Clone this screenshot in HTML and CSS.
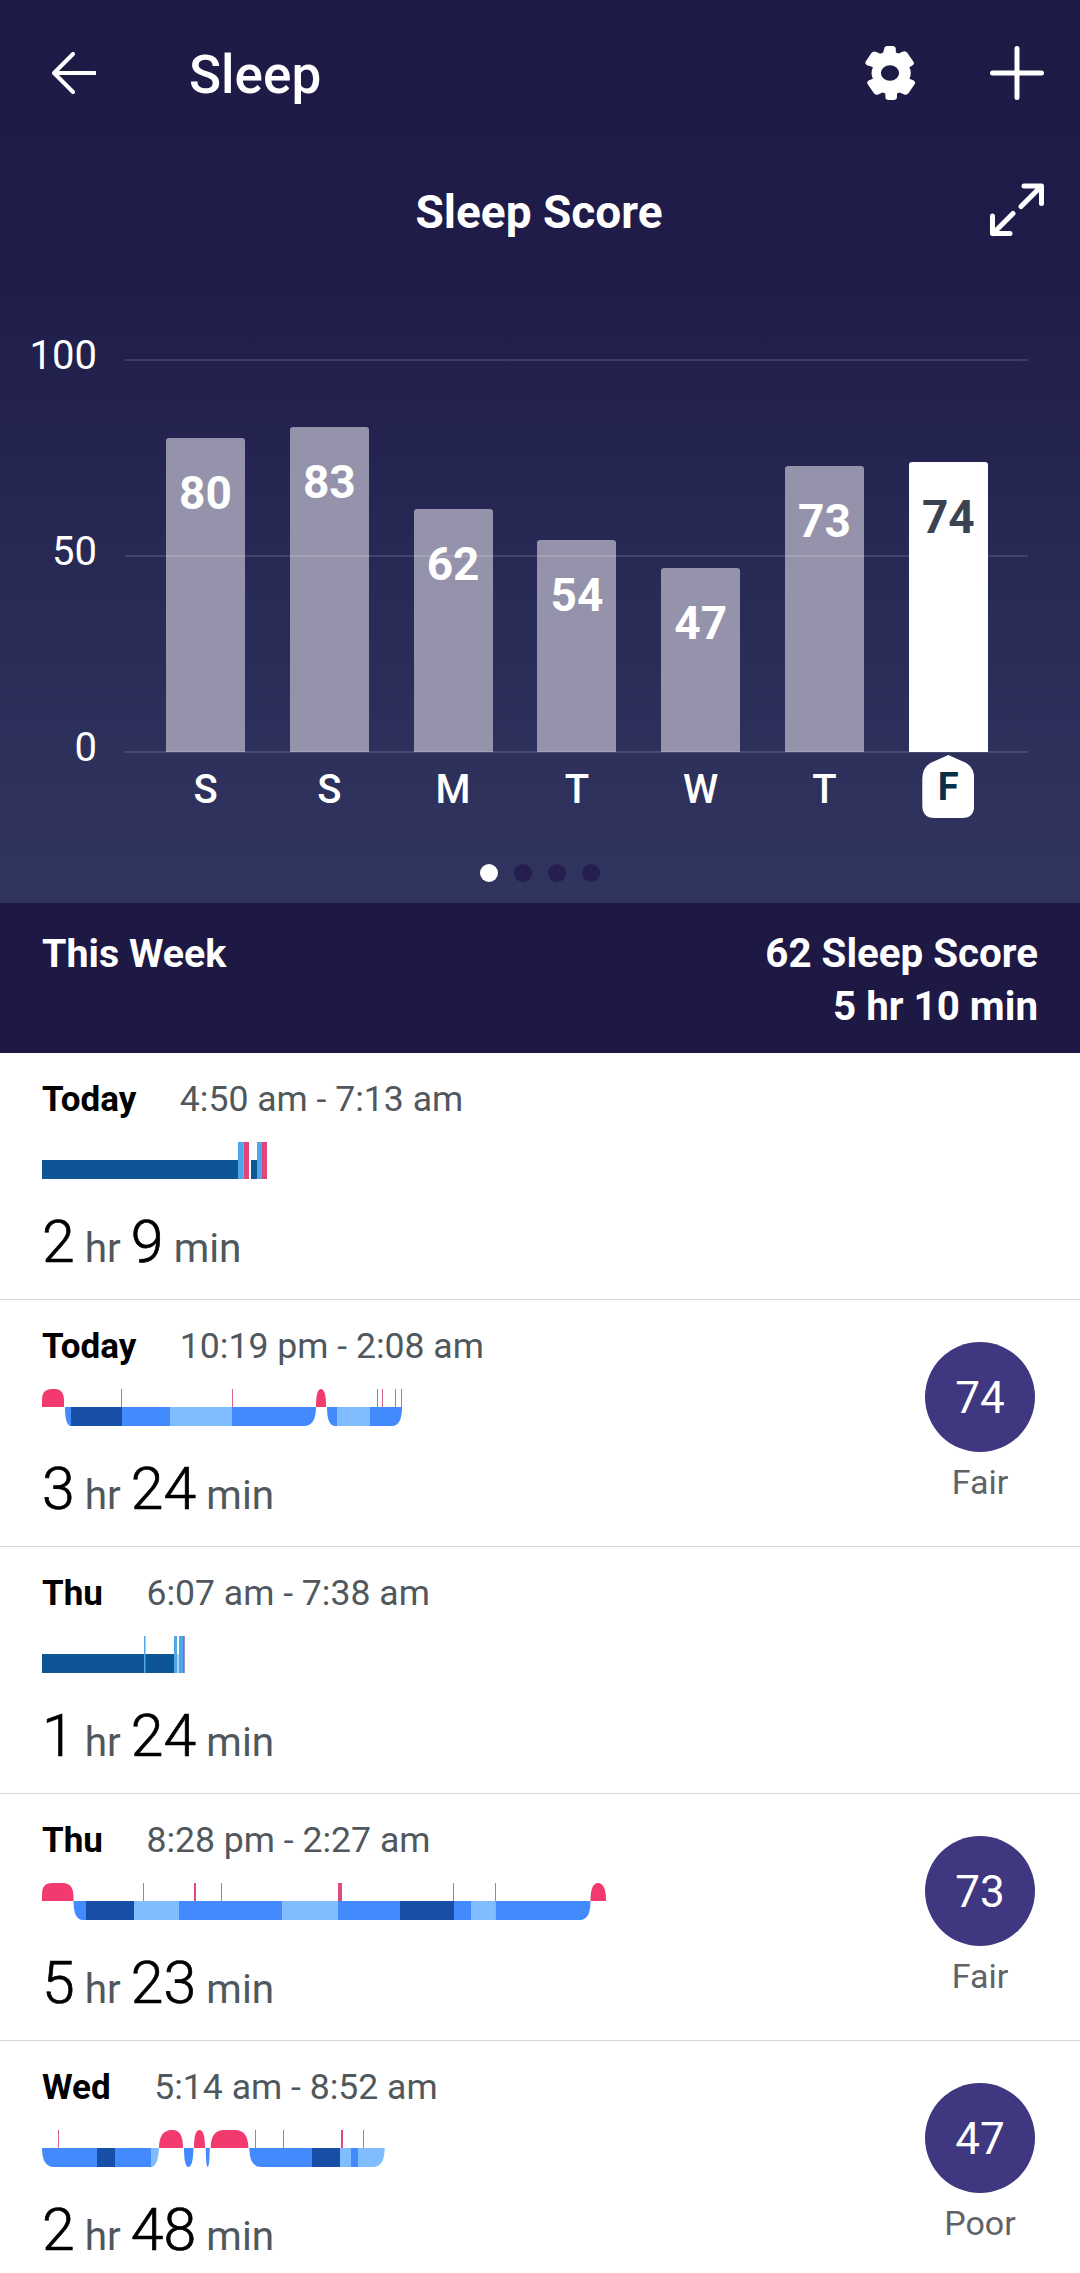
FILE: index.html
```html
<!DOCTYPE html>
<html lang="en">
<head>
<meta charset="UTF-8">
<meta name="viewport" content="width=device-width, initial-scale=1.0">
<title>Sleep</title>
<link rel="stylesheet" href="styles.css">
</head>
<body>
    <section class="hero">
        <header class="topbar">
            <svg class="icon-back" width="44" height="42" viewBox="0 0 44 42">
                <path d="M43 21H3M21 2L2 21l19 19" fill="none" stroke="#fff" stroke-width="4" stroke-linecap="round" stroke-linejoin="round"/>
            </svg>
            <h1 class="page-title">Sleep</h1>
            <svg class="icon-gear" width="50" height="54" viewBox="3.500 0 43 54" preserveAspectRatio="none">
                <path fill="#fff" fill-rule="evenodd" d="M20 3a3 3 0 0 1 3-3h4a3 3 0 0 1 3 3v3.600l2.500 1 3.200-1.800a3.200 3.200 0 0 1 4.300 1.100l5 8.600a3 3 0 0 1-1.100 4.200L41.700 21.300a15 15 0 0 1 0 11.400l3.200 1.600a3 3 0 0 1 1.100 4.200l-5 8.600a3.200 3.200 0 0 1-4.300 1.100l-3.200-1.800-2.500 1V51a3 3 0 0 1-3 3h-4a3 3 0 0 1-3-3v-3.600l-2.500-1-3.200 1.800a3.200 3.200 0 0 1-4.300-1.100l-5-8.600a3 3 0 0 1 1.100-4.200l3.200-1.600a15 15 0 0 1 0-11.400l-3.200-1.600A3 3 0 0 1 4 15.700l5-8.600a3.200 3.200 0 0 1 4.300-1.100l3.200 1.800 2.500-1zM25 19.200a7.800 7.800 0 1 0 0 15.600 7.800 7.800 0 0 0 0-15.600z"/>
            </svg>
            <svg class="icon-plus" width="54" height="54" viewBox="0 0 54 54">
                <path d="M27 2.500v49M2.500 27h49" fill="none" stroke="#fff" stroke-width="5" stroke-linecap="round"/>
            </svg>
        </header>

        <div class="score-head">
            <h2 class="score-title">Sleep Score</h2>
            <svg class="icon-expand" width="54" height="54" viewBox="0 0 54 54">
                <path d="M34 3h17.500v17.500M51 3.500L31 23.500M20 50.500H2.500V33M3 50.500l20-20" fill="none" stroke="#fff" stroke-width="5" stroke-linecap="round" stroke-linejoin="round"/>
            </svg>
        </div>

        <div class="chart">
            <div class="bars">
                <div class="bar" style="height:314px"><span>80</span></div>
                <div class="bar" style="height:325px"><span>83</span></div>
                <div class="bar" style="height:243px"><span>62</span></div>
                <div class="bar" style="height:212px"><span>54</span></div>
                <div class="bar" style="height:184px"><span>47</span></div>
                <div class="bar" style="height:286px"><span>73</span></div>
                <div class="bar bar-active" style="height:290px"><span>74</span></div>
            </div>
            <div class="grid-line grid-top"><span>100</span></div>
            <div class="grid-line grid-mid"><span>50</span></div>
            <div class="grid-line grid-bottom"><span>0</span></div>
        </div>

        <div class="days">
            <div class="day">S</div>
            <div class="day">S</div>
            <div class="day">M</div>
            <div class="day">T</div>
            <div class="day">W</div>
            <div class="day">T</div>
            <div class="day"><span class="day-badge">F</span></div>
        </div>

        <div class="dots">
            <span class="dot dot-active"></span>
            <span class="dot"></span>
            <span class="dot"></span>
            <span class="dot"></span>
        </div>
    </section>

    <section class="week">
        <div class="week-label">This Week</div>
        <div class="week-stats">
            <div>62 Sleep Score</div>
            <div>5 hr 10 min</div>
        </div>
    </section>

    <section class="log">
        <article class="log-row">
            <div class="log-main">
                <div class="log-meta"><b>Today</b><span>4:50 am - 7:13 am</span></div>
                <svg class="graph" width="225" height="37" viewBox="0 0 225 37">
                    <rect class="deep" x="0" y="18" width="196" height="19"/>
                    <rect class="cyan" x="196" y="0" width="5.500" height="37"/>
                    <rect class="rose" x="201.500" y="0" width="5.500" height="37"/>
                    <rect class="deep" x="209" y="18" width="6" height="19"/>
                    <rect class="cyan" x="215" y="0" width="5" height="37"/>
                    <rect class="rose" x="220" y="0" width="5" height="37"/>
                </svg>
                <div class="log-time"><b>2</b> hr <b>9</b> min</div>
            </div>
        </article>

        <article class="log-row">
            <div class="log-main">
                <div class="log-meta"><b>Today</b><span>10:19 pm - 2:08 am</span></div>
                <svg class="graph" width="360" height="37" viewBox="0 0 360 37">
                    <path class="wake" d="M0 18V11Q0 0 10 0H13Q22 0 22 12V18Z"/>
                    <path class="mid" d="M23 18H29V37Q23 37 23 18Z"/>
                    <rect class="dark" x="29" y="18" width="51" height="19"/>
                    <rect class="mid" x="80" y="18" width="48" height="19"/>
                    <rect class="light" x="128" y="18" width="62" height="19"/>
                    <path class="mid" d="M190 18H274Q274 37 262 37H190Z"/>
                    <path class="wake" d="M274 18Q274 0 279 0Q284 0 284 18Z"/>
                    <path class="mid" d="M285 18H295V37H293Q285 37 285 18Z"/>
                    <rect class="light" x="295" y="18" width="33" height="19"/>
                    <path class="mid" d="M328 18H360Q360 37 350 37H328Z"/>
                    <rect class="tick" x="79" y="0" width="1" height="18"/>
                    <rect class="tick" x="190" y="0" width="1" height="18"/>
                    <rect class="tick" x="335" y="0" width="1" height="18"/>
                    <rect class="tick" x="340" y="0" width="1" height="18"/>
                    <rect class="tick" x="353" y="0" width="1" height="18"/>
                    <rect class="tick" x="359" y="0" width="1" height="18"/>
                </svg>
                <div class="log-time"><b>3</b> hr <b>24</b> min</div>
            </div>
            <div class="log-score">
                <div class="score-circle">74</div>
                <div class="score-label">Fair</div>
            </div>
        </article>

        <article class="log-row">
            <div class="log-main">
                <div class="log-meta"><b>Thu</b><span>6:07 am - 7:38 am</span></div>
                <svg class="graph" width="143" height="37" viewBox="0 0 143 37">
                    <rect class="deep" x="0" y="18" width="132" height="19"/>
                    <rect class="cyan" x="102" y="0" width="1.500" height="37"/>
                    <rect class="cyan" x="132" y="0" width="3" height="37"/>
                    <rect class="pale" x="135" y="18" width="2" height="19"/>
                    <rect class="cyan" x="137" y="0" width="4" height="37"/>
                    <rect class="rose" x="141" y="0" width="1" height="37"/>
                    <rect class="violet" x="142" y="0" width="1.500" height="37"/>
                </svg>
                <div class="log-time"><b>1</b> hr <b>24</b> min</div>
            </div>
        </article>

        <article class="log-row">
            <div class="log-main">
                <div class="log-meta"><b>Thu</b><span>8:28 pm - 2:27 am</span></div>
                <svg class="graph" width="565" height="37" viewBox="0 0 565 37">
                    <path class="wake" d="M0 18V11Q0 0 10 0H21Q31.500 0 31.500 14V18Z"/>
                    <path class="mid" d="M31.500 18H44V37H41Q31.500 37 31.500 18Z"/>
                    <rect class="dark" x="44" y="18" width="48" height="19"/>
                    <rect class="light" x="92" y="18" width="45" height="19"/>
                    <rect class="mid" x="137" y="18" width="103.500" height="19"/>
                    <rect class="light" x="240.500" y="18" width="55.500" height="19"/>
                    <rect class="mid" x="296" y="18" width="62" height="19"/>
                    <rect class="dark" x="358" y="18" width="54" height="19"/>
                    <rect class="mid" x="412" y="18" width="17" height="19"/>
                    <rect class="light" x="429" y="18" width="24.500" height="19"/>
                    <path class="mid" d="M453.500 18H548.500Q548.500 37 538 37H453.500Z"/>
                    <path class="wake" d="M548.500 18Q548.500 0 556 0Q564 0 564 18Z"/>
                    <rect class="tick" x="101" y="0" width="1" height="18"/>
                    <rect class="tick-wide" x="152" y="0" width="2" height="18"/>
                    <rect class="tick" x="179" y="0" width="1" height="18"/>
                    <rect class="tick-wide" x="296" y="0" width="4" height="18"/>
                    <rect class="tick" x="411" y="0" width="1" height="18"/>
                    <rect class="tick" x="453" y="0" width="1" height="18"/>
                </svg>
                <div class="log-time"><b>5</b> hr <b>23</b> min</div>
            </div>
            <div class="log-score">
                <div class="score-circle">73</div>
                <div class="score-label">Fair</div>
            </div>
        </article>

        <article class="log-row">
            <div class="log-main">
                <div class="log-meta"><b>Wed</b><span>5:14 am - 8:52 am</span></div>
                <svg class="graph" width="343" height="37" viewBox="0 0 343 37">
                    <path class="mid" d="M0 18H55V37H12Q0 37 0 18Z"/>
                    <rect class="dark" x="55" y="18" width="18" height="19"/>
                    <rect class="mid" x="73" y="18" width="36" height="19"/>
                    <path class="light" d="M109 18H117Q116 37 109 37Z"/>
                    <path class="wake" d="M117 18Q117 0 130 0H131Q141 0 141 18Z"/>
                    <path class="mid" d="M142 18H151.500Q151 37 146.500 37Q142 37 142 18Z"/>
                    <path class="wake" d="M152 18Q152 0 157.500 0Q163 0 163 18Z"/>
                    <path class="mid" d="M163.700 18H167.700Q167.500 37 165.700 37Q164 37 163.700 18Z"/>
                    <path class="wake" d="M168.700 18Q168.700 0 182 0H193Q206.300 0 206.300 18Z"/>
                    <path class="mid" d="M207.300 18H270V37H219Q207.300 37 207.300 18Z"/>
                    <rect class="dark" x="270" y="18" width="28" height="19"/>
                    <rect class="light" x="298" y="18" width="11" height="19"/>
                    <rect class="mid" x="309" y="18" width="7" height="19"/>
                    <path class="light" d="M316 18H342.700Q342.700 37 331 37H316Z"/>
                    <rect class="tick" x="16" y="0" width="1" height="18"/>
                    <rect class="tick" x="213" y="0" width="1" height="18"/>
                    <rect class="tick" x="241" y="0" width="1" height="18"/>
                    <rect class="tick-wide" x="299" y="0" width="2" height="18"/>
                    <rect class="tick" x="321" y="0" width="1" height="18"/>
                </svg>
                <div class="log-time"><b>2</b> hr <b>48</b> min</div>
            </div>
            <div class="log-score">
                <div class="score-circle">47</div>
                <div class="score-label">Poor</div>
            </div>
        </article>
    </section>
</body>
</html>
```

FILE: styles.css
```css
html, body {
    margin: 0;
    padding: 0;
    height: 2273px;
    overflow: hidden;
}

body {
    font-family: Roboto, "Liberation Sans", sans-serif;
    background-color: #fff;
}

.hero {
    height: 903px;
    color: #fff;
    background: linear-gradient(180deg, #1e1a46 0%, #1f1c49 30%, #2a2c58 70%, #30355f 100%);
}

.topbar {
    display: flex;
    align-items: center;
    height: 146px;
    padding: 0 36px 0 52px;
}

.page-title {
    margin: 3px 0 0 93px;
    font-size: 53px;
    font-weight: 500;
    flex: 1;
}

.icon-plus {
    margin-left: 75px;
}

.score-head {
    position: relative;
    display: flex;
    justify-content: center;
    align-items: center;
    height: 130px;
}

.score-title {
    margin: 2px 2px 0 0;
    font-size: 46px;
    font-weight: 700;
}

.icon-expand {
    position: absolute;
    top: 37px;
    right: 36px;
}

.chart {
    position: relative;
    height: 392px;
    width: 903px;
    margin: 84px 0 0 125px;
}

.bars {
    display: flex;
    align-items: flex-end;
    gap: 44.800px;
    height: 100%;
    padding-left: 41px;
}

.bar {
    width: 79px;
    box-sizing: border-box;
    padding-top: 27px;
    text-align: center;
    background-color: #9593ab;
    border-radius: 3px 3px 0 0;
    font-size: 46px;
    font-weight: 700;
    line-height: 56px;
}

.bar-active {
    background-color: #fff;
    color: #3a4450;
}

.grid-line {
    position: absolute;
    left: 0;
    right: 0;
    height: 2px;
    margin-top: -1px;
    background-color: rgba(255, 255, 255, 0.13);
}

.grid-top { top: 0; }
.grid-mid { top: 50%; }
.grid-bottom { top: 100%; }

.grid-line span {
    position: absolute;
    right: 931px;
    top: -25px;
    font-size: 40px;
    line-height: 44px;
}

.days {
    display: flex;
    gap: 44.800px;
    margin: 3px 0 0 166px;
    height: 63px;
}

.day {
    display: flex;
    justify-content: center;
    align-items: center;
    width: 79px;
    padding-top: 5px;
    font-size: 40px;
    font-weight: 500;
}

.day-badge {
    display: flex;
    justify-content: center;
    align-items: center;
    flex: none;
    width: 52px;
    height: 63px;
    margin-top: -5px;
    color: #06304a;
    font-size: 38px;
    font-weight: 700;
    background-color: #fff;
    clip-path: path("M26 0L44 8Q52 13 52 24V50Q52 63 40 63H12Q0 63 0 50V24Q0 13 8 8Z");
}

.dots {
    display: flex;
    justify-content: center;
    gap: 16px;
    margin-top: 46px;
}

.dot {
    width: 18px;
    height: 18px;
    border-radius: 50%;
    background-color: #241f4f;
}

.dot-active {
    background-color: #fff;
}

.week {
    display: flex;
    justify-content: space-between;
    box-sizing: border-box;
    height: 150px;
    padding: 24px 42px 0;
    background-color: #1e1845;
    color: #fff;
    font-size: 40.300px;
    font-weight: 700;
    line-height: 53px;
}

.week-label {
    font-size: 39.400px;
}

.week-stats {
    text-align: right;
}

.log-row {
    display: flex;
    justify-content: space-between;
    box-sizing: border-box;
    height: 247px;
    padding: 25.500px 45px 0 42px;
    border-bottom: 1px solid #d8d8d8;
}

.log-meta {
    display: flex;
    gap: 43.500px;
    font-size: 35.600px;
    line-height: 41.500px;
    color: #50575d;
}

.log-meta b {
    font-size: 35px;
    color: #000;
    font-weight: 700;
}

.graph {
    display: block;
    margin-top: 22px;
}

.mid { fill: #448aff; }
.dark { fill: #174ea6; }
.light { fill: #80bdff; }
.wake { fill: #f23a6f; }
.tick { fill: #d9658c; }
.tick-wide { fill: #dd4a7c; }
.deep { fill: #0d5595; }
.cyan { fill: #4fa6e8; }
.pale { fill: #a9d4f5; }
.rose { fill: #e2447c; }
.violet { fill: #9b8fd0; }

.log-time {
    margin-top: 28px;
    font-size: 40.500px;
    line-height: 70px;
    color: #50575d;
    white-space: nowrap;
}

.log-time b {
    font-size: 59px;
    font-weight: 300;
    -webkit-text-stroke: 0.7px #000;
    color: #000;
}

.log-score {
    display: flex;
    flex-direction: column;
    align-items: center;
    width: 110px;
    padding-top: 16.500px;
}

.score-circle {
    display: flex;
    justify-content: center;
    align-items: center;
    width: 110px;
    height: 110px;
    padding-top: 2px;
    box-sizing: border-box;
    border-radius: 50%;
    background-color: #3f3780;
    color: #fff;
    font-size: 44px;
}

.score-label {
    margin-top: 10px;
    font-size: 34px;
    line-height: 40px;
    color: #5f6368;
}
```
